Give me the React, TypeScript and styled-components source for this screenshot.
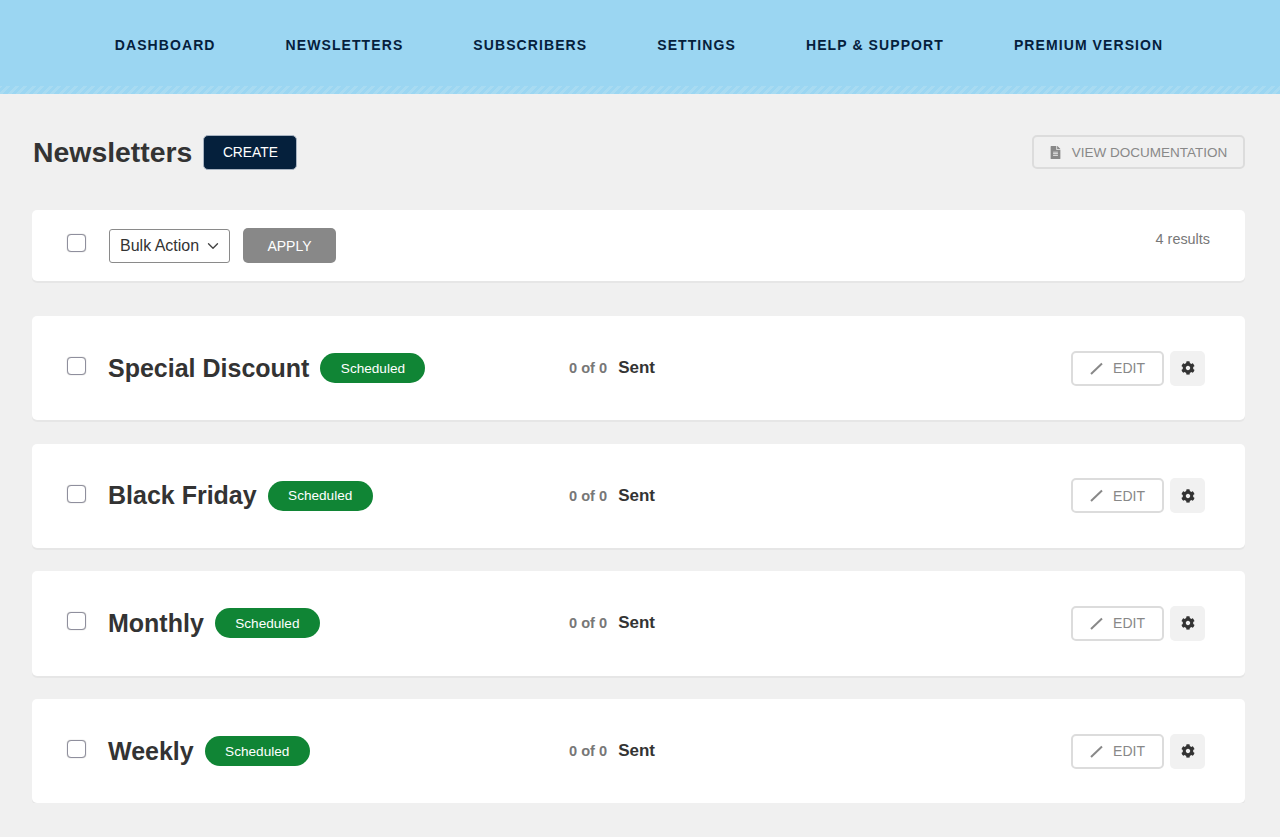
import styled, { createGlobalStyle } from "styled-components"
import { FaCog, FaFileAlt } from "react-icons/fa"
import { ChevronDown } from "lucide-react"

const GlobalStyle = createGlobalStyle`
    html, body {
        margin: 0;
        padding: 0;
        background-color: #f0f0f0;
        font-family: "Liberation Sans", Arial, sans-serif;
        color: #333;
    }
`

const TopBar = styled.header`
    height: 94px;
    box-sizing: border-box;
    background-color: #9bd6f2;
    display: flex;
    flex-direction: column;
`

const Nav = styled.nav`
    flex: 1;
    display: flex;
    justify-content: center;
    align-items: center;
    gap: 70px;
    padding: 4px 2px 0 0;
`

const NavLink = styled.a`
    font-size: 14px;
    font-weight: 700;
    letter-spacing: 1.09px;
    color: #05203c;
    text-transform: uppercase;
    white-space: nowrap;
`

const Stripes = styled.div`
    height: 8px;
    background: repeating-linear-gradient(-45deg, #9bd6f2 0, #9bd6f2 3px, #a8dbf2 3px, #a8dbf2 6px);
`

const Main = styled.main`
    padding: 41px 35px 0 32px;
`

const TitleRow = styled.div`
    display: flex;
    align-items: center;
    height: 35px;
    margin-bottom: 40px;
`

const Title = styled.h1`
    font-size: 28.4px;
    font-weight: 700;
    color: #333;
    margin: 0 11px 0 1px;
`

const CreateButton = styled.button`
    width: 94px;
    height: 35px;
    border: 1px solid #a9b4c2;
    border-radius: 5px;
    background-color: #05203c;
    color: #fff;
    font: 13.8px "Liberation Sans", Arial, sans-serif;
    padding: 0;
`

const DocsButton = styled.button`
    margin-left: auto;
    align-self: flex-start;
    width: 213px;
    height: 34px;
    box-sizing: border-box;
    border: 2px solid #dcdcdc;
    border-radius: 5px;
    background: transparent;
    color: #888;
    font: 13.5px "Liberation Sans", Arial, sans-serif;
    display: flex;
    align-items: center;
    justify-content: center;
    gap: 11px;
    padding: 0;
    svg {
        width: 11px;
        height: 13px;
        color: #888;
    }
`

const Card = styled.section`
    background-color: #fff;
    border-radius: 5px;
    box-shadow: 0 2px 0 #e6e6e6;
    display: flex;
    align-items: center;
    box-sizing: border-box;
    padding-left: 35px;
`

const Toolbar = styled(Card)`
    height: 71px;
    margin-bottom: 35px;
    padding-right: 35px;
`

const Check = styled.input.attrs({ type: "checkbox" })`
    appearance: none;
    width: 19px;
    height: 18px;
    margin: -4px 22px 0 0;
    border: 1px solid #8f8f9d;
    border-radius: 4px;
    background-color: #fff;
    box-shadow: 0 0 1px #999;
    flex: none;
`

const ToolbarCheck = styled(Check)`
    margin-top: -5px;
    margin-right: 23px;
`

const BulkSelect = styled.div`
    width: 121px;
    height: 34px;
    box-sizing: border-box;
    border: 1px solid #8a8a8a;
    border-radius: 3px;
    display: flex;
    align-items: center;
    justify-content: space-between;
    padding: 0 7px 0 10px;
    font-size: 16px;
    color: #333;
    margin-right: 13px;
    svg {
        width: 18px;
        height: 18px;
        color: #444;
    }
`

const ApplyButton = styled.button`
    width: 93px;
    height: 35px;
    border: none;
    border-radius: 5px;
    background-color: #888;
    color: #fff;
    font: 14px "Liberation Sans", Arial, sans-serif;
    padding: 0;
`

const Results = styled.span`
    margin-left: auto;
    font-size: 14.4px;
    color: #777;
    margin-top: -13px;
`

const List = styled.div`
    display: flex;
    flex-direction: column;
    gap: 23.37px;
`

const Row = styled(Card)`
    height: 104.3px;
    padding-right: 40px;
`

const NameCell = styled.div`
    width: 461px;
    display: flex;
    align-items: center;
    gap: 11px;
`

const Name = styled.h2`
    font-size: 25px;
    font-weight: 700;
    color: #333;
    margin: 0;
    white-space: nowrap;
`

const Badge = styled.span`
    width: 105px;
    height: 30px;
    border-radius: 15px;
    background-color: #108535;
    color: #fff;
    font-size: 13.6px;
    display: flex;
    align-items: center;
    justify-content: center;
`

const Progress = styled.div`
    display: flex;
    align-items: center;
    gap: 11px;
`

const Count = styled.span`
    font-size: 14.6px;
    font-weight: 700;
    color: #777;
`

const Sent = styled.span`
    font-size: 17px;
    font-weight: 700;
    color: #333;
`

const Actions = styled.div`
    margin-left: auto;
    display: flex;
    align-items: center;
    gap: 6px;
`

const EditButton = styled.button`
    width: 93px;
    height: 35px;
    box-sizing: border-box;
    border: 2px solid #dcdcdc;
    border-radius: 5px;
    background: #fff;
    color: #888;
    font: 14px "Liberation Sans", Arial, sans-serif;
    display: flex;
    align-items: center;
    justify-content: center;
    gap: 10px;
    padding: 0;
    svg {
        width: 13px;
        height: 13px;
    }
`

const GearButton = styled.button`
    width: 35px;
    height: 35px;
    border: none;
    border-radius: 5px;
    background-color: #f1f1f1;
    color: #333;
    display: flex;
    align-items: center;
    justify-content: center;
    padding: 0;
    svg {
        width: 14px;
        height: 14px;
    }
`

const navItems = ["Dashboard", "Newsletters", "Subscribers", "Settings", "Help & Support", "Premium Version"]
const newsletters = ["Special Discount", "Black Friday", "Monthly", "Weekly"]

const App = () => {
    return (
        <>
            <GlobalStyle />
            <TopBar>
                <Nav>
                    {navItems.map(item => <NavLink key={item}>{item}</NavLink>)}
                </Nav>
                <Stripes />
            </TopBar>
            <Main>
                <TitleRow>
                    <Title>Newsletters</Title>
                    <CreateButton>CREATE</CreateButton>
                    <DocsButton><FaFileAlt />VIEW DOCUMENTATION</DocsButton>
                </TitleRow>
                <Toolbar>
                    <ToolbarCheck />
                    <BulkSelect>Bulk Action <ChevronDown strokeWidth={1.8} /></BulkSelect>
                    <ApplyButton>APPLY</ApplyButton>
                    <Results>4 results</Results>
                </Toolbar>
                <List>
                    {newsletters.map(name => (
                        <Row key={name}>
                            <Check />
                            <NameCell>
                                <Name>{name}</Name>
                                <Badge>Scheduled</Badge>
                            </NameCell>
                            <Progress>
                                <Count>0 of 0</Count>
                                <Sent>Sent</Sent>
                            </Progress>
                            <Actions>
                                <EditButton>
                                    <svg viewBox="0 0 13 13">
                                        <path d="M1 12 L12 1.5" stroke="#888" strokeWidth="2" fill="none" />
                                    </svg>
                                    EDIT
                                </EditButton>
                                <GearButton><FaCog /></GearButton>
                            </Actions>
                        </Row>
                    ))}
                </List>
            </Main>
        </>
    )
}

export default App
